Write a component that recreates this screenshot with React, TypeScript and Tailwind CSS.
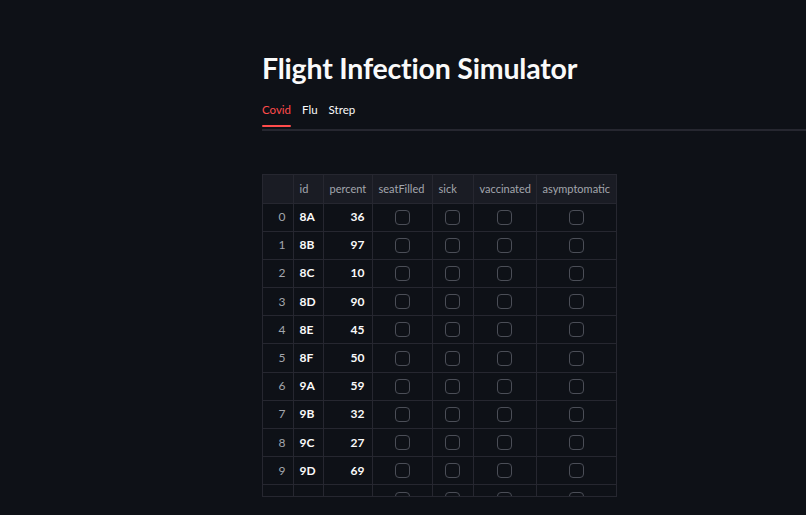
import React from 'react'

type Row = { id: string; percent: number }

const rows: Row[] = [
  { id: '8A', percent: 36 },
  { id: '8B', percent: 97 },
  { id: '8C', percent: 10 },
  { id: '8D', percent: 90 },
  { id: '8E', percent: 45 },
  { id: '8F', percent: 50 },
  { id: '9A', percent: 59 },
  { id: '9B', percent: 32 },
  { id: '9C', percent: 27 },
  { id: '9D', percent: 69 },
]

const boolCols = [
  { name: 'seatFilled', w: 'w-[60px]' },
  { name: 'sick', w: 'w-[41px]' },
  { name: 'vaccinated', w: 'w-[63px]' },
  { name: 'asymptomatic', w: 'w-[81px]' },
]

function Box() {
  return <div className="mx-auto w-[15px] h-[15px] rounded-[4px] border border-[#4b4e57]" />
}

export default function App() {
  return (
    <div className="min-h-screen bg-[#0e1117] text-[#fafafa] font-['Lato','Noto_Sans',sans-serif] overflow-hidden">
      <div className="pl-[262px] pt-[49px]">
        <h1 className="text-[28.5px] leading-[38px] font-bold tracking-[-0.2px]">Flight Infection Simulator</h1>

        {/* Tabs */}
        <div className="mt-[14px] relative flex gap-[11px] text-[11.5px] h-[30px]">
          <div className="absolute left-0 right-0 bottom-0 h-[2px] bg-[#262730]" />
          <div className="relative text-[#ff4b4b]">
            Covid
            <div className="absolute left-0 right-0 top-[24px] h-[2px] bg-[#ff4b4b] rounded" />
          </div>
          <div>Flu</div>
          <div>Strep</div>
        </div>

        {/* Dataframe */}
        <div className="mt-[43px] w-[355px] h-[323px] overflow-hidden border border-[#262730] text-[12px]">
          <table className="table-fixed border-collapse w-[354px]">
            <thead>
              <tr className="bg-[#1a1c24] h-[28px] text-[#a3a6ad] text-[11px]">
                <th className="w-[30px] border-r border-b border-[#262730]" />
                <th className="w-[30px] border-r border-b border-[#262730] text-left font-normal pl-[6px]">id</th>
                <th className="w-[49px] border-r border-b border-[#262730] text-left font-normal pl-[6px]">percent</th>
                {boolCols.map((c) => (
                  <th key={c.name} className={`${c.w} border-r border-b border-[#262730] text-left font-normal pl-[6px] whitespace-nowrap`}>
                    {c.name}
                  </th>
                ))}
              </tr>
            </thead>
            <tbody>
              {rows.map((r, i) => (
                <tr key={r.id} className="h-[28.2px]">
                  <td className="border-r border-b border-[#262730] text-right pr-[7px] text-[#a3a6ad]">{i}</td>
                  <td className="border-r border-b border-[#262730] pl-[6px] font-bold">{r.id}</td>
                  <td className="border-r border-b border-[#262730] text-right pr-[7px] font-bold">{r.percent}</td>
                  {boolCols.map((c) => (
                    <td key={c.name} className="border-r border-b border-[#262730]">
                      <Box />
                    </td>
                  ))}
                </tr>
              ))}
              {/* next row, cut off by the frame */}
              <tr className="h-[28px] align-top">
                <td className="border-r border-[#262730]" />
                <td className="border-r border-[#262730]" />
                <td className="border-r border-[#262730]" />
                {boolCols.map((c) => (
                  <td key={c.name} className="border-r border-[#262730] pt-[7px]">
                    <Box />
                  </td>
                ))}
              </tr>
            </tbody>
          </table>
        </div>
      </div>
    </div>
  )
}
